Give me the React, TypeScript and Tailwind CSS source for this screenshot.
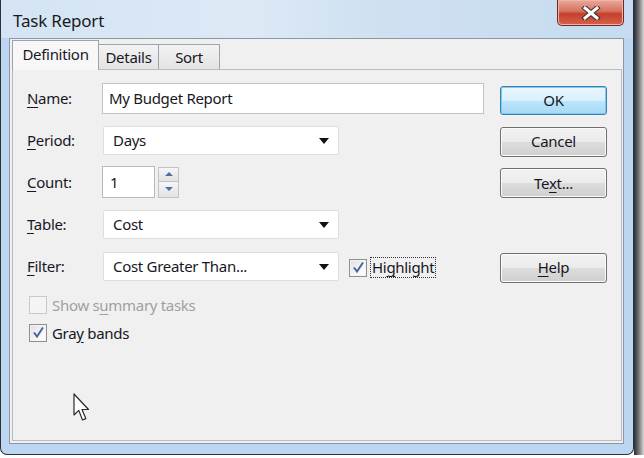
import React from "react";

function Check({ checked, disabled }: { checked?: boolean; disabled?: boolean }) {
    return (
        <span
            className={
                disabled
                    ? "flex h-[18px] w-[18px] shrink-0 items-center justify-center border border-[#c9c9c9] bg-[#f4f4f4]"
                    : "flex h-[18px] w-[18px] shrink-0 items-center justify-center border border-[#8e8f8f] bg-[linear-gradient(135deg,#dedede,#f7f7f7_60%,#ffffff)] shadow-[inset_0_0_0_1px_#f4f4f4]"
            }
        >
            {checked && (
                <svg width="13" height="13" viewBox="0 0 13 13">
                    <path d="M2 6.5 L5 10.5 L11 1.5" fill="none" stroke="#4a64a4" strokeWidth="2" />
                </svg>
            )}
        </span>
    );
}

function Arrow() {
    return (
        <svg width="10" height="6" viewBox="0 0 10 6" className="shrink-0">
            <path d="M0 0 H10 L5 6 Z" fill="#111" />
        </svg>
    );
}

function Combo({ value }: { value: string }) {
    return (
        <div className="flex h-[29px] w-[236px] items-center justify-between rounded-[2px] border border-[#dedede] bg-white pl-[9px] pr-[9px]">
            <span>{value}</span>
            <Arrow />
        </div>
    );
}

function Btn({ children, primary }: { children: React.ReactNode; primary?: boolean }) {
    return (
        <button
            className={
                primary
                    ? "flex h-[29px] w-[107px] items-center justify-center rounded-[3px] border border-[#3c7fb1] bg-[linear-gradient(#eaf6fd_0%,#d9f0fc_50%,#bee6fd_50%,#a7d9f5_100%)] shadow-[inset_0_0_0_1px_#7ecbf1]"
                    : "flex h-[30px] w-[107px] items-center justify-center rounded-[3px] border border-[#707070] bg-[linear-gradient(#f2f2f2_0%,#ebebeb_50%,#dddddd_50%,#cfcfcf_100%)] shadow-[inset_0_0_0_1px_#fbfbfb]"
            }
        >
            {children}
        </button>
    );
}

function Label({ k, rest }: { k: string; rest: string }) {
    return (
        <span className="w-[75px] shrink-0">
            <span className="underline underline-offset-[3px]">{k}</span>
            {rest}
        </span>
    );
}

export default function App() {
    return (
        <div className="flex h-[458px] w-[644px] overflow-hidden bg-white font-['Noto_Sans',sans-serif] text-[15px] tracking-[-0.3px] text-[#17171f]">
            {/* window */}
            <div className="relative flex h-[455px] w-[634px] shrink-0 flex-col rounded-b-[7px] border border-t-0 border-[#2f3338] bg-[#bcd6f1]">
                {/* title bar */}
                <div className="flex h-[38px] shrink-0 items-start justify-between bg-[linear-gradient(90deg,#d4e4f4_0%,#dde9f5_40%,#cfe0f1_60%,#c6dbf0_100%)]">
                    <span className="ml-[12px] mt-[8px] text-[17px] tracking-[-0.2px] text-[#1a1a1a]">Task Report</span>
                    <div className="mr-[9px] flex h-[26px] w-[67px] items-center justify-center rounded-b-[5px] border border-t-0 border-[#6e2a22] bg-[linear-gradient(#e9a99c_0%,#d7715f_45%,#c4402d_55%,#d5624a_100%)] shadow-[inset_0_0_0_1px_#f0b5a8]">
                        <svg width="20" height="14" viewBox="0 0 20 14">
                            <path d="M4 2 L16 12 M16 2 L4 12" stroke="#3b2a2a" strokeWidth="5" strokeLinecap="square" />
                            <path d="M4 2 L16 12 M16 2 L4 12" stroke="#ffffff" strokeWidth="3" strokeLinecap="square" />
                        </svg>
                    </div>
                </div>

                {/* client area */}
                <div className="ml-[8px] h-[406px] w-[615px] border border-[#8c97a6] bg-[#f0f0f0] pl-[2px] pt-[1px]">
                    {/* tabs */}
                    <div className="flex h-[29px] items-end">
                        <div className="relative z-10 -mb-px flex h-[30px] w-[87px] items-center justify-center border border-b-0 border-[#9da3ac] bg-[#f7f7f7] pb-[2px]">
                            Definition
                        </div>
                        <div className="flex h-[25px] w-[60px] items-center justify-center border border-l-0 border-b-0 border-[#9da3ac] bg-[linear-gradient(#f3f3f3,#e3e3e3)]">
                            Details
                        </div>
                        <div className="flex h-[25px] w-[61px] items-center justify-center border border-l-0 border-b-0 border-[#9da3ac] bg-[linear-gradient(#f3f3f3,#e3e3e3)]">
                            Sort
                        </div>
                    </div>

                    {/* panel */}
                    <div className="relative h-[372px] w-[610px] border border-[#b7bcc4] bg-[#f0f0f0] pl-[14px] pt-[13px]">
                        {/* Name */}
                        <div className="flex h-[31px] items-center">
                            <Label k="N" rest="ame:" />
                            <div className="w-[382px] shrink-0">
                                <div className="flex h-[31px] w-[382px] items-center border border-[#c2c2c2] bg-white pl-[6px]">
                                    My Budget Report
                                </div>
                            </div>
                            <div className="ml-[16px] mt-[3px]">
                                <Btn primary>OK</Btn>
                            </div>
                        </div>

                        {/* Period */}
                        <div className="mt-[12px] flex h-[29px] items-center">
                            <Label k="P" rest="eriod:" />
                            <div className="w-[382px] shrink-0 pl-px">
                                <Combo value="Days" />
                            </div>
                            <div className="ml-[16px] mt-[2px]">
                                <Btn>Cancel</Btn>
                            </div>
                        </div>

                        {/* Count */}
                        <div className="mt-[11px] flex h-[32px] items-center">
                            <Label k="C" rest="ount:" />
                            <div className="flex w-[382px] shrink-0 items-center gap-[3px]">
                                <div className="flex h-[32px] w-[53px] items-center border border-[#b9b9b9] bg-white pl-[7px]">
                                    1
                                </div>
                                <div className="flex h-[31px] w-[21px] flex-col">
                                    <div className="flex h-1/2 items-center justify-center border border-[#c3c3c3] bg-[linear-gradient(#f6f6f6,#e2e2e2)]">
                                        <svg width="8" height="4" viewBox="0 0 8 4">
                                            <path d="M0 4 L4 0 L8 4 Z" fill="#4e6ea8" />
                                        </svg>
                                    </div>
                                    <div className="flex h-1/2 items-center justify-center border border-t-0 border-[#c3c3c3] bg-[linear-gradient(#f6f6f6,#e2e2e2)]">
                                        <svg width="8" height="4" viewBox="0 0 8 4">
                                            <path d="M0 0 H8 L4 4 Z" fill="#4e6ea8" />
                                        </svg>
                                    </div>
                                </div>
                            </div>
                            <div className="ml-[16px] mt-[2px]">
                                <Btn>
                                    <span>
                                        Te<span className="underline underline-offset-[3px]">x</span>t...
                                    </span>
                                </Btn>
                            </div>
                        </div>

                        {/* Table */}
                        <div className="mt-[12px] flex h-[29px] items-center">
                            <Label k="T" rest="able:" />
                            <div className="w-[382px] shrink-0 pl-px">
                                <Combo value="Cost" />
                            </div>
                        </div>

                        {/* Filter */}
                        <div className="mt-[13px] flex h-[29px] items-center">
                            <Label k="F" rest="ilter:" />
                            <div className="flex w-[382px] shrink-0 items-center pl-px">
                                <Combo value="Cost Greater Than..." />
                                <div className="ml-[10px] mt-[2px] flex items-center gap-[3px]">
                                    <Check checked />
                                    <span className="border border-dotted border-[#333] px-px leading-[19px]">
                                        Hi<span className="underline underline-offset-[3px]">g</span>hlight
                                    </span>
                                </div>
                            </div>
                            <div className="ml-[16px] mt-[2px]">
                                <Btn>
                                    <span>
                                        <span className="underline underline-offset-[3px]">H</span>elp
                                    </span>
                                </Btn>
                            </div>
                        </div>

                        {/* checkboxes */}
                        <div className="mt-[13px] flex items-center gap-[5px] pl-[2px] text-[#a0a0a0]">
                            <Check disabled />
                            <span>
                                Show s<span className="underline underline-offset-[3px]">u</span>mmary tasks
                            </span>
                        </div>
                        <div className="mt-[5px] flex items-center gap-[5px] pl-[2px]">
                            <Check checked />
                            <span>
                                Gra<span className="underline underline-offset-[3px]">y</span> bands
                            </span>
                        </div>

                        {/* mouse pointer */}
                        <svg
                            className="absolute left-[60px] top-[323px]"
                            width="17"
                            height="30"
                            viewBox="0 0 17 30"
                        >
                            <path
                                d="M1 1 L1 22 L5.8 17.4 L9.5 27 L12.8 25.6 L9 16.5 L15.5 16.5 Z"
                                fill="#ffffff"
                                stroke="#2a2a2a"
                                strokeWidth="1.2"
                                strokeLinejoin="round"
                            />
                        </svg>
                    </div>
                </div>
            </div>
            {/* shadow on the right */}
            <div className="h-[455px] w-[10px] bg-[linear-gradient(90deg,#2b2e33_0%,#55585c_30%,#8a8c8f_60%,#d9d9d9_100%)]" />
        </div>
    );
}
